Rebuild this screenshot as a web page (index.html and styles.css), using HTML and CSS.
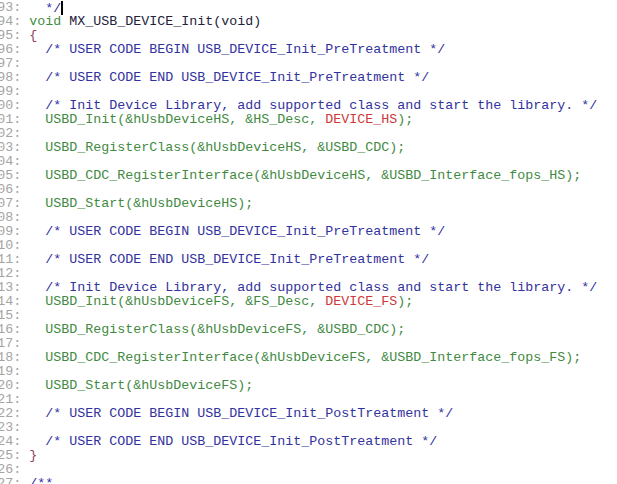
FILE: index.html
```html
<!DOCTYPE html>
<html>
<head>
<meta charset="utf-8">
<link rel="stylesheet" href="styles.css">
</head>
<body>
<div class="code">
<div class="ln"><span class="no">93:</span><span class="tx">  <span class="cm">*/</span><span class="caret"></span></span></div>
<div class="ln"><span class="no">94:</span><span class="tx"><span class="kw">void</span> <span class="fn">MX_USB_DEVICE_Init(void)</span></span></div>
<div class="ln"><span class="no">95:</span><span class="tx"><span class="br">{</span></span></div>
<div class="ln"><span class="no">96:</span><span class="tx">  <span class="cm">/* USER CODE BEGIN USB_DEVICE_Init_PreTreatment */</span></span></div>
<div class="ln"><span class="no">97:</span><span class="tx"></span></div>
<div class="ln"><span class="no">98:</span><span class="tx">  <span class="cm">/* USER CODE END USB_DEVICE_Init_PreTreatment */</span></span></div>
<div class="ln"><span class="no">99:</span><span class="tx"></span></div>
<div class="ln"><span class="no">100:</span><span class="tx">  <span class="cm">/* Init Device Library, add supported class and start the library. */</span></span></div>
<div class="ln"><span class="no">101:</span><span class="tx">  <span class="gr">USBD_Init(&amp;hUsbDeviceHS, &amp;HS_Desc, </span><span class="rd">DEVICE_HS</span><span class="gr">);</span></span></div>
<div class="ln"><span class="no">102:</span><span class="tx"></span></div>
<div class="ln"><span class="no">103:</span><span class="tx">  <span class="gr">USBD_RegisterClass(&amp;hUsbDeviceHS, &amp;USBD_CDC);</span></span></div>
<div class="ln"><span class="no">104:</span><span class="tx"></span></div>
<div class="ln"><span class="no">105:</span><span class="tx">  <span class="gr">USBD_CDC_RegisterInterface(&amp;hUsbDeviceHS, &amp;USBD_Interface_fops_HS);</span></span></div>
<div class="ln"><span class="no">106:</span><span class="tx"></span></div>
<div class="ln"><span class="no">107:</span><span class="tx">  <span class="gr">USBD_Start(&amp;hUsbDeviceHS);</span></span></div>
<div class="ln"><span class="no">108:</span><span class="tx"></span></div>
<div class="ln"><span class="no">109:</span><span class="tx">  <span class="cm">/* USER CODE BEGIN USB_DEVICE_Init_PreTreatment */</span></span></div>
<div class="ln"><span class="no">110:</span><span class="tx"></span></div>
<div class="ln"><span class="no">111:</span><span class="tx">  <span class="cm">/* USER CODE END USB_DEVICE_Init_PreTreatment */</span></span></div>
<div class="ln"><span class="no">112:</span><span class="tx"></span></div>
<div class="ln"><span class="no">113:</span><span class="tx">  <span class="cm">/* Init Device Library, add supported class and start the library. */</span></span></div>
<div class="ln"><span class="no">114:</span><span class="tx">  <span class="gr">USBD_Init(&amp;hUsbDeviceFS, &amp;FS_Desc, </span><span class="rd">DEVICE_FS</span><span class="gr">);</span></span></div>
<div class="ln"><span class="no">115:</span><span class="tx"></span></div>
<div class="ln"><span class="no">116:</span><span class="tx">  <span class="gr">USBD_RegisterClass(&amp;hUsbDeviceFS, &amp;USBD_CDC);</span></span></div>
<div class="ln"><span class="no">117:</span><span class="tx"></span></div>
<div class="ln"><span class="no">118:</span><span class="tx">  <span class="gr">USBD_CDC_RegisterInterface(&amp;hUsbDeviceFS, &amp;USBD_Interface_fops_FS);</span></span></div>
<div class="ln"><span class="no">119:</span><span class="tx"></span></div>
<div class="ln"><span class="no">120:</span><span class="tx">  <span class="gr">USBD_Start(&amp;hUsbDeviceFS);</span></span></div>
<div class="ln"><span class="no">121:</span><span class="tx"></span></div>
<div class="ln"><span class="no">122:</span><span class="tx">  <span class="cm">/* USER CODE BEGIN USB_DEVICE_Init_PostTreatment */</span></span></div>
<div class="ln"><span class="no">123:</span><span class="tx"></span></div>
<div class="ln"><span class="no">124:</span><span class="tx">  <span class="cm">/* USER CODE END USB_DEVICE_Init_PostTreatment */</span></span></div>
<div class="ln"><span class="no">125:</span><span class="tx"><span class="br">}</span></span></div>
<div class="ln"><span class="no">126:</span><span class="tx"></span></div>
<div class="ln"><span class="no">127:</span><span class="tx"><span class="cm">/**</span></span></div>
</div>
</body>
</html>
```
FILE: styles.css
```css
html, body {
  margin: 0;
  padding: 0;
  background: #ffffff;
  overflow: hidden;
}
.code {
  padding-top: 1px;
  font-family: "Liberation Mono", "DejaVu Sans Mono", monospace;
  font-size: 13.333px;
  line-height: 14px;
  color: #22223a;
}
.ln {
  display: flex;
  height: 14px;
  white-space: pre;
}
.no {
  flex: 0 0 21.3px;
  min-width: 0;
  margin-right: 8px;
  display: flex;
  justify-content: flex-end;
  color: #a4a4a4;
}
.tx {
  display: block;
  white-space: pre;
}
.cm { color: #32329e; }
.kw { color: #3f8f3f; }
.fn { color: #22223a; }
.gr { color: #428a42; }
.rd { color: #cc3a3a; }
.br { color: #8e3e60; }
.caret {
  display: inline-block;
  width: 2px;
  height: 14px;
  vertical-align: -3px;
  background: #000000;
}
```
